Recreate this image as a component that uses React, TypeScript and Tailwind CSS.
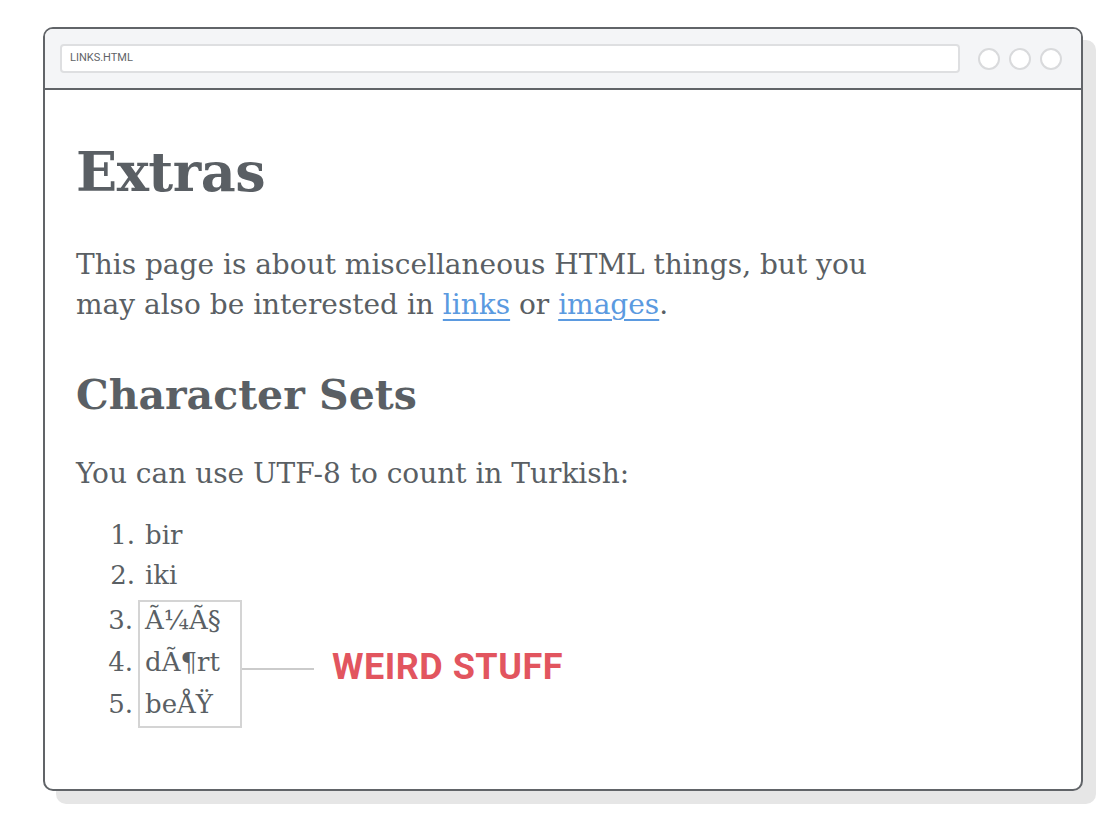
const serif = "font-['DejaVu_Serif',serif]";

const turkish = ["bir", "iki"];
const garbled = ["Ã¼Ã§", "dÃ¶rt", "beÅŸ"];

export default function App() {
  return (
    <div className="min-h-[825px] bg-white pt-[27px] pl-[43px]">
      <div className="w-[1040px] h-[764px] rounded-[10px] border-2 border-[#616468] bg-white shadow-[13px_13px_0_#e6e6e6] overflow-hidden flex flex-col">
        {/* browser chrome */}
        <div className="h-[61px] shrink-0 bg-[#f4f5f7] border-b-2 border-[#616468] flex items-center pl-[15px] pr-[19px] gap-[18px]">
          <div className="flex-1 h-[29px] rounded-[4px] border-2 border-[#dedfe1] bg-white flex items-center pl-[8px]">
            <span className="font-['Roboto',sans-serif] text-[11px] text-[#5f6368]">LINKS.HTML</span>
          </div>
          <div className="flex gap-[9px]">
            <div className="w-[22px] h-[22px] rounded-full border-2 border-[#d9dadc] bg-white" />
            <div className="w-[22px] h-[22px] rounded-full border-2 border-[#d9dadc] bg-white" />
            <div className="w-[22px] h-[22px] rounded-full border-2 border-[#d9dadc] bg-white" />
          </div>
        </div>

        {/* page */}
        <div className={`${serif} text-[#5a5f64] pl-[31px]`}>
          <h1 className="mt-[55px] text-[54px] leading-[54px] font-bold tracking-[-0.5px]">Extras</h1>
          <p className="mt-[46px] text-[28px] leading-[40px] w-[800px]">
            This page is about miscellaneous HTML things, but you may also be interested in{" "}
            <a className="text-[#5b9ae0] underline decoration-2 underline-offset-[5px]">links</a> or{" "}
            <a className="text-[#5b9ae0] underline decoration-2 underline-offset-[5px]">images</a>.
          </p>
          <h2 className="mt-[50px] text-[41px] leading-[41px] font-bold">Character Sets</h2>
          <p className="mt-[38px] text-[28px] leading-[40px]">You can use UTF-8 to count in Turkish:</p>

          <div className="mt-[21px] flex text-[26px]">
            {/* numbers */}
            <div className="w-[62px] pr-[3px] text-right">
              <div className="leading-[40px]">1.</div>
              <div className="leading-[40px]">2.</div>
              <div className="mt-[5px] border-2 border-transparent">
                {[3, 4, 5].map((n) => (
                  <div key={n} className="relative -top-[3px] leading-[42px]">{n}.</div>
                ))}
              </div>
            </div>
            {/* items */}
            <div>
              {turkish.map((w) => (
                <div key={w} className="leading-[40px] pl-[7px]">{w}</div>
              ))}
              <div className="mt-[5px] flex items-center">
                <div className="w-[104px] h-[128px] border-2 border-[#d4d4d4] pl-[5px]">
                  {garbled.map((w) => (
                    <div key={w} className="relative -top-[3px] leading-[42px]">{w}</div>
                  ))}
                </div>
                <div className="mt-[10px] w-[72px] h-[2px] bg-[#cbcbcb]" />
                <span className="mt-[6px] ml-[18px] font-['Roboto',sans-serif] font-bold text-[36px] leading-none tracking-[0.5px] text-[#e2555f]">
                  WEIRD STUFF
                </span>
              </div>
            </div>
          </div>
        </div>
      </div>
    </div>
  );
}
